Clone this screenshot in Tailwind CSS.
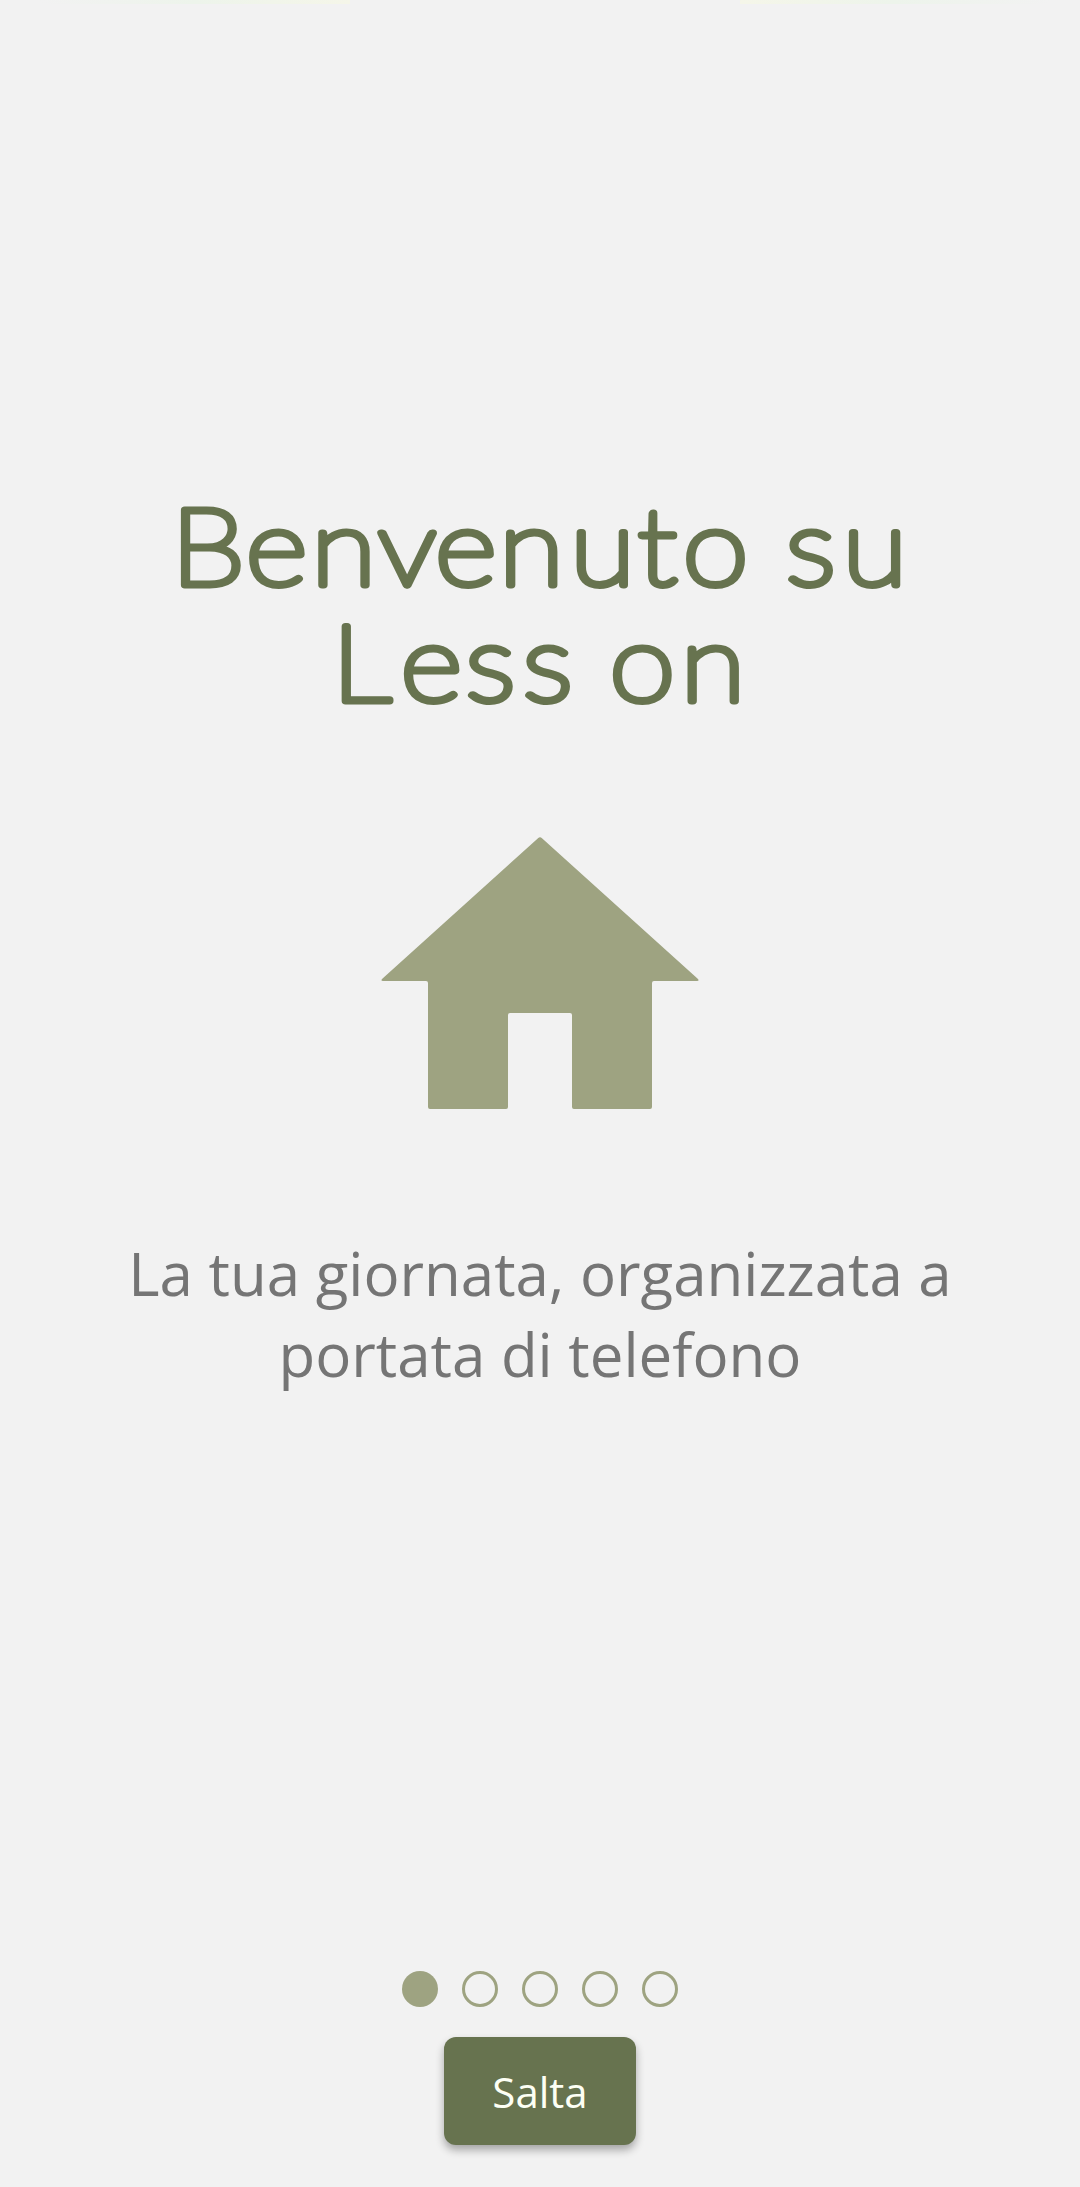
<!DOCTYPE html>
<html lang="it">
<head>
<meta charset="utf-8">
<title>Less on</title>
<script src="https://cdn.jsdelivr.net/npm/@tailwindcss/browser@4"></script>
</head>
<body class="bg-[#f2f2f2] font-['Open_Sans',sans-serif]">
<main class="w-[1080px] h-[2187px] flex flex-col items-center text-center overflow-hidden">
  <div class="flex w-full h-[5px] shrink-0 justify-between pl-[40px] pr-[30px]">
    <div class="w-[310px] h-[4px] bg-linear-to-r from-[#f2f2f2] via-[#edf4eb] to-[#f5f6e9]"></div>
    <div class="w-[310px] h-[4px] bg-linear-to-r from-[#f5f6e9] via-[#edf4eb] to-[#f2f2f2]"></div>
  </div>
  <h1 class="mt-[483px]">
    <svg class="block overflow-visible w-[1080px] h-[234px] font-['Lato',sans-serif] font-thin text-[106px]" viewBox="0 0 960 234" preserveAspectRatio="none" fill="#67734f" stroke="#67734f" stroke-width="7" stroke-linejoin="round" stroke-linecap="round">
      <text y="96.500" x="152 218.500 276.600 336 386.600 443.600 507 567 607 668 698.500 749">Benvenuto su</text>
      <text y="213.500" x="295 356 413.800 464.600 512 541.800 605">Less on</text>
    </svg>
  </h1>
  <svg class="mt-[115px] w-[318px] h-[272px] shrink-0" viewBox="0 0 318 272" fill="#9ea381"><path d="M157 1.200q2-2 4 0L317 142q1.500 2-1 2H273q-2 0-2 2V270q0 2-2 2H193q-2 0-2-2V178q0-2-2-2H129q-2 0-2 2V270q0 2-2 2H49q-2 0-2-2V146q0-2-2-2H2q-2.500 0-1-2z"/></svg>
  <p class="mt-[124px] text-[#757575] text-[60px] leading-[81px] whitespace-nowrap">La tua giornata, organizzata a<br>portata di telefono</p>
  <div class="mt-[576px] flex gap-[24px]">
    <span class="size-[36px] rounded-full bg-[#9ea381]"></span>
    <span class="size-[36px] rounded-full border-[3px] border-[#9ea381]"></span>
    <span class="size-[36px] rounded-full border-[3px] border-[#9ea381]"></span>
    <span class="size-[36px] rounded-full border-[3px] border-[#9ea381]"></span>
    <span class="size-[36px] rounded-full border-[3px] border-[#9ea381]"></span>
  </div>
  <button class="mt-[30px] w-[192px] h-[108px] shrink-0 rounded-[12px] bg-[#67734f] text-[#fdfff5] text-[42px] leading-[58px] pt-[2px] shadow-[0_5px_8px_rgba(0,0,0,0.32)]">Salta</button>
</main>
</body>
</html>
